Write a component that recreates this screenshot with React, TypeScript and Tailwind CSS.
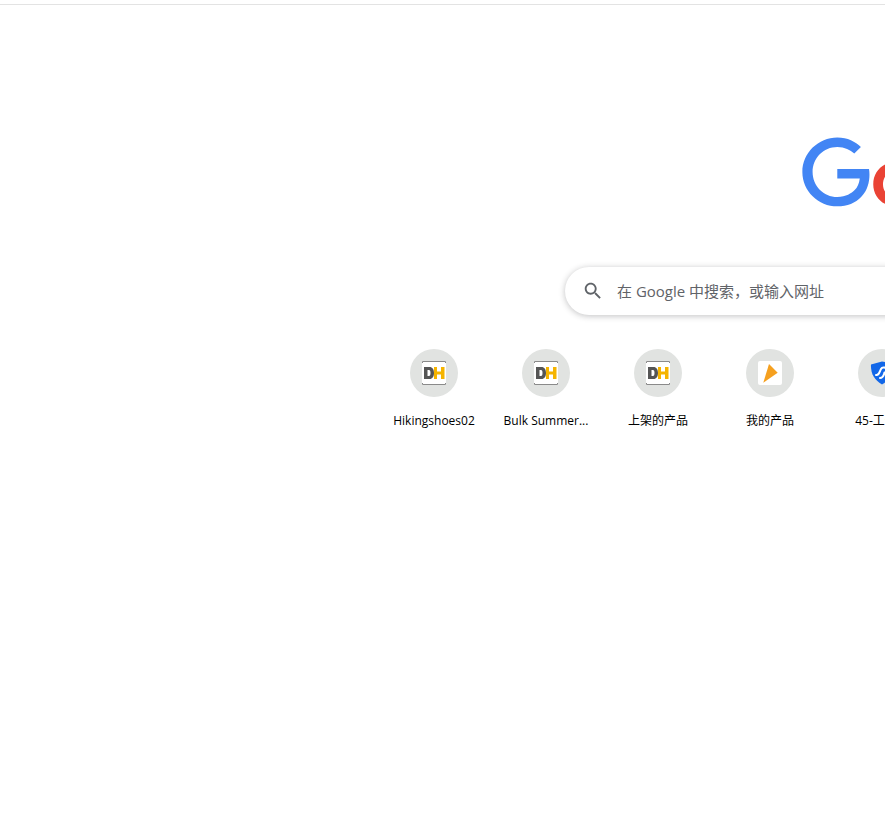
const font = "font-['Open_Sans','Noto_Sans_CJK_SC',sans-serif]";

function GoogleLogo() {
  return (
    <svg width="272" height="92" viewBox="0 0 272 92">
      <path fill="#EA4335" d="M115.75 47.18c0 12.77-9.99 22.18-22.25 22.18s-22.25-9.41-22.25-22.18C71.25 34.32 81.24 25 93.5 25s22.25 9.32 22.25 22.18zm-9.74 0c0-7.98-5.79-13.44-12.51-13.44S80.99 39.2 80.99 47.18c0 7.9 5.79 13.44 12.51 13.44s12.51-5.55 12.51-13.44z" />
      <path fill="#4285F4" d="M35.29 41.41V32H67c.31 1.64.47 3.58.47 5.68 0 7.06-1.93 15.79-8.15 22.01-6.05 6.3-13.78 9.66-24.02 9.66C16.32 69.35.36 53.89.36 34.91.36 15.93 16.32.47 35.3.47c10.5 0 17.98 4.12 23.6 9.49l-6.64 6.64c-4.03-3.78-9.49-6.72-16.97-6.72-13.86 0-24.7 11.17-24.7 25.03 0 13.86 10.84 25.03 24.7 25.03 8.99 0 14.11-3.61 17.39-6.89 2.66-2.66 4.41-6.46 5.1-11.65l-22.49.01z" />
    </svg>
  );
}

function DhIcon() {
  return (
    <svg width="24" height="24" viewBox="0 0 24 24">
      <rect width="24" height="24" fill="#fff" />
      <path d="M0.5 2V0.5H23.5V2M0.5 22V23.5H23.5V22" fill="none" stroke="#8a8a8a" />
      <path fillRule="evenodd" fill="#555" d="M2 6H7.5C10.5 6 12 8.5 12 12S10.5 18 7.5 18H2ZM5.5 9V15H7C8 15 8.5 14 8.5 12S8 9 7 9Z" />
      <path fill="#f5b400" d="M12 6H15V10.5H19V6H22.5V18H19V13.5H15V18H12Z" />
    </svg>
  );
}

function ArrowIcon() {
  return (
    <svg width="24" height="24" viewBox="0 0 24 24">
      <rect width="24" height="24" rx="2" fill="#fff" />
      <path d="M11 3L19.7 11.7L5.3 21.7Z" fill="#f5a01f" />
    </svg>
  );
}

function ShieldIcon() {
  return (
    <svg width="24" height="24" viewBox="0 0 24 24">
      <path d="M12 0.5L22 2.5C24 10 22 18 12 23.5C4 19 0.5 12 1 3.5Z" fill="#1267e8" />
      <path d="M6 14C9 15 9.5 11 11 8C12 6 15 6 16 7.5M10 17C13 17 14 14 14.5 11.5" fill="none" stroke="#fff" strokeWidth="2" strokeLinecap="round" />
    </svg>
  );
}

function Tile({ label, icon }: { label: string; icon: React.ReactNode }) {
  return (
    <div className="w-[112px] flex flex-col items-center pt-4">
      <div className="w-12 h-12 rounded-full bg-[#e1e3e1] flex items-center justify-center">{icon}</div>
      <div className="mt-[15px] text-[12px] leading-[18px] text-black whitespace-nowrap">{label}</div>
    </div>
  );
}

export default function App() {
  return (
    <div className={`w-full h-screen overflow-hidden bg-white ${font}`}>
      <div className="h-[5px] border-b border-[#e3e3e3]" />
      <main className="w-[1876px] flex flex-col items-center">
        <div className="mt-[132px] h-[92px]">
          <GoogleLogo />
        </div>
        <div className="mt-[38px] w-[746px] h-12 rounded-full bg-white shadow-[0_1px_6px_rgba(32,33,36,0.28)] flex items-center pl-[17px]">
          <svg width="22" height="22" viewBox="0 0 24 24" fill="#5f6368">
            <path d="M15.5 14h-.79l-.28-.27C15.41 12.59 16 11.11 16 9.5 16 5.91 13.09 3 9.5 3S3 5.91 3 9.5 5.91 16 9.5 16c1.61 0 3.09-.59 4.23-1.57l.27.28v.79l5 4.99L20.49 19l-4.99-5zm-6 0C7.01 14 5 11.99 5 9.5S7.01 5 9.5 5 14 7.01 14 9.5 11.99 14 9.5 14z" />
          </svg>
          <span className="ml-[13px] text-[15px] text-[#5f6368]">在 Google 中搜索，或输入网址</span>
        </div>
        <div className="mt-[18px] w-[1120px] flex">
          <Tile label="Hikingshoes02" icon={<DhIcon />} />
          <Tile label="Bulk Summer..." icon={<DhIcon />} />
          <Tile label="上架的产品" icon={<DhIcon />} />
          <Tile label="我的产品" icon={<ArrowIcon />} />
          <Tile label="45-工作台" icon={<ShieldIcon />} />
        </div>
      </main>
    </div>
  );
}
